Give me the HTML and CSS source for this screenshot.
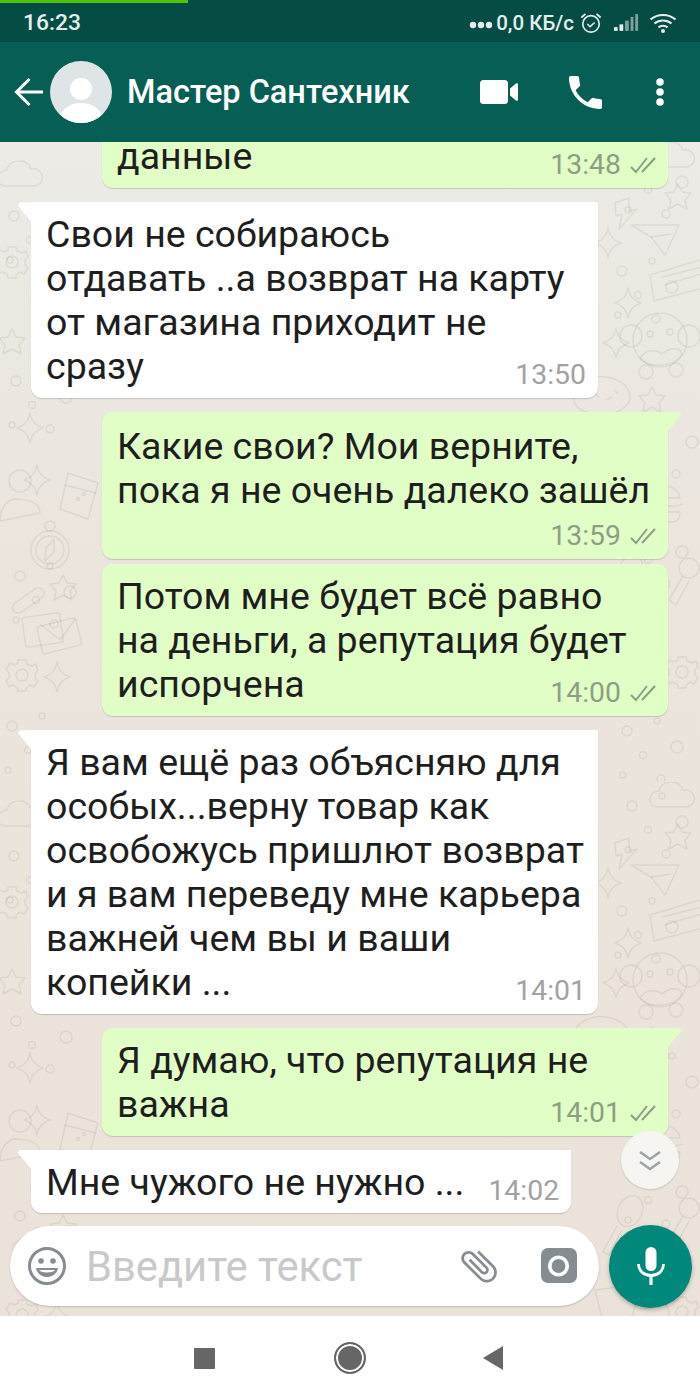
FILE: index.html
```html
<!DOCTYPE html>
<html lang="ru">
<head>
    <meta charset="UTF-8">
    <meta name="viewport" content="width=device-width, initial-scale=1.0">
    <title>Мастер Сантехник</title>
    <link rel="stylesheet" href="styles.css">
</head>
<body>
<div class="phone">
    <div class="progress"></div>

    <div class="status-bar">
        <span class="clock">16:23</span>
        <div class="status-right">
            <svg class="status-dots" viewBox="0 0 24 8" width="24" height="8"><circle cx="4" cy="4" r="3.2"/><circle cx="12" cy="4" r="3.2"/><circle cx="20" cy="4" r="3.2"/></svg>
            <span class="net-speed">0,0 КБ/с</span>
            <svg class="alarm" viewBox="0 0 24 24" width="22" height="22">
                <circle cx="12" cy="13" r="9" fill="none" stroke="#e3efec" stroke-width="1.8"/>
                <path d="M8 13l3 3 5-4.500" fill="none" stroke="#e3efec" stroke-width="1.6"/>
                <path d="M1.500 6L6 2M22.500 6L18 2" fill="none" stroke="#e3efec" stroke-width="2"/>
            </svg>
            <svg class="signal" viewBox="0 0 28 20" width="26" height="19">
                <rect x="1" y="15" width="4" height="4" fill="#e3efec"/>
                <rect x="7" y="12" width="4" height="7" fill="#e3efec"/>
                <rect x="13" y="8" width="4" height="11" fill="#7fa39c"/>
                <rect x="19" y="4" width="3" height="15" fill="#7fa39c"/>
                <rect x="24" y="1" width="3" height="18" fill="#7fa39c"/>
            </svg>
            <svg class="wifi" viewBox="0 0 28 20" width="28" height="20">
                <path d="M1.500 6.500C8.500 .5 19.500 .5 26.500 6.500M5.500 10.500C10.500 6.500 17.500 6.500 22.500 10.500M9.500 14.300C12 12.500 16 12.500 18.500 14.300" fill="none" stroke="#e3efec" stroke-width="2.200"/>
                <circle cx="14" cy="18" r="2" fill="#e3efec"/>
            </svg>
        </div>
    </div>

    <header class="toolbar">
        <svg class="back" viewBox="0 0 30 30" width="30" height="30"><path d="M29 15H3M15.500 2L2.500 15l13 13" fill="none" stroke="#fff" stroke-width="3"/></svg>
        <svg class="avatar" viewBox="0 0 62 62" width="62" height="62">
            <defs><clipPath id="avatar-clip"><circle cx="31" cy="31" r="31"/></clipPath></defs>
            <circle cx="31" cy="31" r="31" fill="#dfe5e7"/>
            <circle cx="31" cy="28" r="11" fill="#fff"/>
            <ellipse cx="31" cy="60" rx="22" ry="18" fill="#fff" clip-path="url(#avatar-clip)"/>
        </svg>
        <h1 class="contact">Мастер Сантехник</h1>
        <div class="toolbar-actions">
            <svg class="video" viewBox="0 0 38 24" width="38" height="24">
                <rect x="0" y="0" width="28" height="24" rx="3.500" fill="#fff"/>
                <path d="M30 8.500l6-5c1-.6 2 0 2 1v15c0 1-1 1.600-2 1l-6-5z" fill="#fff"/>
            </svg>
            <svg class="call" viewBox="3 3 18 18" width="33" height="33"><path fill="#fff" d="M6.620 10.790c1.440 2.830 3.760 5.140 6.590 6.590l2.200-2.200c.27-.27.67-.36 1.020-.24 1.120.37 2.330.57 3.570.57.55 0 1 .45 1 1V20c0 .55-.45 1-1 1-9.390 0-17-7.610-17-17 0-.55.45-1 1-1h3.500c.55 0 1 .45 1 1 0 1.250.2 2.450.57 3.570.11.35.03.74-.25 1.020l-2.200 2.200z"/></svg>
            <svg class="more" viewBox="0 0 8 28" width="8" height="28"><circle cx="4" cy="4" r="3.800" fill="#fff"/><circle cx="4" cy="14" r="3.800" fill="#fff"/><circle cx="4" cy="24" r="3.800" fill="#fff"/></svg>
        </div>
    </header>

    <main class="chat">
        <!-- wallpaper doodles -->
        <svg class="doodles" width="700" height="1174">
            <defs>
                <path id="star4" d="M0-15Q2-3 13 0Q2 3 0 15Q-2 3-13 0Q-2-3 0-15z"/>
                <path id="star5" d="M0-13l4 8 9 1-6 7 2 9-9-5-9 5 2-9-6-7 9-1z"/>
                <g id="cloud"><path d="M-24 12c-9-2-8-15 3-16 2-12 21-12 24-1 11-3 17 14 4 17z"/></g>
                <g id="bolt"><path d="M4-17L-10-12l1 13 6-2-3 15L12-6 4-4z"/></g>
                <g id="plane"><path d="M-24-10L24-10 10 20-4 2z"/><path d="M-4 2L16-1"/></g>
                <g id="ticket"><path d="M-30-2L30-20 34 8-26 24z"/><path d="M-18 0L30-12M-16 8L31-6"/></g>
                <g id="monkey">
                    <circle cy="0" r="27"/><circle cx="-29" cy="-4" r="11"/><circle cx="29" cy="-4" r="11"/>
                    <circle cx="-10" cy="-6" r="3"/><circle cx="10" cy="-8" r="3"/>
                    <path d="M-20 18c6-10 18-8 22-4 6-6 18-8 20 0-6 12-32 16-42 4z"/>
                    <circle cx="-14" cy="32" r="7"/><circle cx="16" cy="30" r="7"/>
                </g>
                <g id="donut"><path d="M-30 14c-8-20 18-32 36-26 16 4 28 20 10 32-14 8-38 6-46-6z"/><path d="M-10 4l4 3M2 10l5-3M10 0l3 4"/></g>
                <g id="person"><circle cy="-14" r="11"/><path d="M-20 26c0-12 6-20 14-22 10 0 26 2 26 14z"/></g>
                <g id="cup"><path d="M-12-22L18-12 8 24-20 14z"/><path d="M-15-10L16-2"/><circle cx="-2" cy="4" r="1.500"/><circle cx="4" cy="-1" r="1.500"/></g>
                <g id="compass"><circle r="19"/><circle r="14"/><circle cy="-24" r="5"/><path d="M4-11L4 2-5 11-4-2z"/></g>
                <g id="clip"><rect x="-18" y="-5" width="36" height="11" rx="5.500" transform="rotate(-35)"/></g>
                <g id="mail"><rect x="-26" y="-18" width="38" height="30" rx="3" transform="rotate(-8)"/><rect x="-12" y="-8" width="40" height="28" rx="3" transform="rotate(-14)"/><path d="M-10-8L10 8 26-14"/></g>
                <g id="gear"><circle r="6"/><path d="M-4-15H4L5-11 10-9 14-11 16-5 13-2V3L16 6 12 12 8 10 4 13 4 16H-4L-5 12-10 10-13 12-16 6-13 3V-2L-16-6-12-12-8-10-4-12z"/></g>
                <g id="burger"><path d="M-22-4c2-18 42-18 44 0z"/><path d="M-24 2c6 4 10-2 16 1s10-3 16 0 10 1 16-1"/><path d="M-22 10h44c0 8-4 10-8 10h-28c-4 0-8-2-8-10z"/></g>
                <g id="pop"><ellipse cy="-12" rx="12" ry="16" transform="rotate(25)"/><path d="M-8 4L-22 30l6 3L-3 8"/></g>
                <g id="lemon"><path d="M-30-12L18-18 4 22-22 20z"/><circle cx="20" cy="-10" r="17"/><path d="M20-27V7M3-10H37"/></g>
                <g id="key"><circle cx="4" cy="-14" r="10"/><path d="M-2-6L-16 18l7 5 13-24"/></g>
                <g id="dots">
                    <circle cx="12" cy="14" r="5"/><circle cx="42" cy="4" r="3"/><circle cx="28" cy="38" r="3.500"/>
                    <circle cx="62" cy="30" r="6"/><circle cx="8" cy="58" r="3"/><circle cx="46" cy="62" r="4"/>
                </g>
                <pattern id="doodle" width="700" height="640" patternUnits="userSpaceOnUse">
                    <g fill="none" stroke="#746b5a" stroke-opacity="0.12" stroke-width="1.500" stroke-linejoin="round">
                        <use href="#cloud" x="680" y="13"/>
                        <use href="#star5" x="678" y="55"/>
                        <use href="#bolt" x="625" y="73"/>
                        <use href="#plane" x="655" y="93"/>
                        <use href="#star4" x="608" y="101"/>
                        <use href="#ticket" x="680" y="135"/>
                        <use href="#star4" x="628" y="161"/>
                        <use href="#monkey" x="660" y="198"/>
                        <use href="#star4" x="616" y="201"/>
                        <use href="#donut" x="605" y="248"/>
                        <use href="#star5" x="652" y="258"/>
                        <use href="#star4" x="30" y="286"/>
                        <use href="#person" x="20" y="353"/>
                        <use href="#star4" x="37" y="338"/>
                        <use href="#cup" x="80" y="353"/>
                        <use href="#compass" x="50" y="408"/>
                        <use href="#clip" x="28" y="458"/>
                        <use href="#star5" x="63" y="446"/>
                        <use href="#mail" x="50" y="490"/>
                        <use href="#gear" x="22" y="533"/>
                        <use href="#star4" x="57" y="535"/>
                        <use href="#cloud" x="28" y="32"/>
                        <use href="#gear" x="12" y="120"/>
                        <use href="#star5" x="12" y="200"/>
                        <use href="#burger" x="658" y="360"/>
                        <use href="#pop" x="625" y="440"/>
                        <use href="#key" x="685" y="440"/>
                        <use href="#lemon" x="625" y="520"/>
                        <use href="#gear" x="682" y="530"/>
                        <use href="#dots" x="620" y="10"/>
                        <use href="#dots" x="610" y="115"/>
                        <use href="#dots" x="630" y="270"/>
                        <use href="#dots" x="615" y="575"/>
                        <use href="#dots" x="620" y="380"/>
                        <use href="#dots" x="2" y="60"/>
                        <use href="#dots" x="4" y="225"/>
                        <use href="#dots" x="0" y="570"/>
                        <use href="#dots" x="8" y="420"/>
                    </g>
                </pattern>
            </defs>
            <rect width="700" height="1174" fill="url(#doodle)"/>
        </svg>

        <div class="messages">
            <div class="bubble bubble-out bubble-cut">
                данные<span class="meta meta-out">13:48 <svg class="ticks" viewBox="0 0 26 18" width="26" height="18"><path d="M1 11l5 5L17 2M12 16L25 2" fill="none" stroke="#8e9e85" stroke-width="2"/></svg></span>
            </div>
            <div class="bubble bubble-in tail group-start">
                Свои не собираюсь<br>отдавать ..а возврат на карту<br>от магазина приходит не<br>сразу<span class="meta">13:50</span>
            </div>
            <div class="bubble bubble-out tail group-start bubble-tight">
                Какие свои? Мои верните,<br>пока я не очень далеко зашёл<span class="meta meta-out">13:59 <svg class="ticks" viewBox="0 0 26 18" width="26" height="18"><path d="M1 11l5 5L17 2M12 16L25 2" fill="none" stroke="#8e9e85" stroke-width="2"/></svg></span>
            </div>
            <div class="bubble bubble-out">
                Потом мне будет всё равно<br>на деньги, а репутация будет<br>испорчена<span class="meta meta-out">14:00 <svg class="ticks" viewBox="0 0 26 18" width="26" height="18"><path d="M1 11l5 5L17 2M12 16L25 2" fill="none" stroke="#8e9e85" stroke-width="2"/></svg></span>
            </div>
            <div class="bubble bubble-in tail group-start">
                Я вам ещё раз объясняю для<br>особых...верну товар как<br>освобожусь пришлют возврат<br>и я вам переведу мне карьера<br>важней чем вы и ваши<br>копейки ...<span class="meta">14:01</span>
            </div>
            <div class="bubble bubble-out tail group-start">
                Я думаю, что репутация не<br>важна<span class="meta meta-out">14:01 <svg class="ticks" viewBox="0 0 26 18" width="26" height="18"><path d="M1 11l5 5L17 2M12 16L25 2" fill="none" stroke="#8e9e85" stroke-width="2"/></svg></span>
            </div>
            <div class="bubble bubble-in bubble-fit tail group-start">
                Мне чужого не нужно ...<span class="meta">14:02</span>
            </div>
        </div>

        <button class="scroll-down" type="button">
            <svg viewBox="0 0 24 22" width="24" height="22"><path d="M2 2l10 7 10-7M2 12l10 7 10-7" fill="none" stroke="#9aa6a6" stroke-width="2.600"/></svg>
        </button>

        <div class="composer">
            <div class="input-bar">
                <svg class="smile" viewBox="0 0 40 40" width="40" height="40">
                    <circle cx="20" cy="20" r="17.500" fill="none" stroke="#858d92" stroke-width="3"/>
                    <circle cx="14" cy="15" r="2.800" fill="#858d92"/><circle cx="26" cy="15" r="2.800" fill="#858d92"/>
                    <path d="M9 22h22c-1 6-6 9-11 9s-10-3-11-9z" fill="#858d92"/>
                    <path d="M12 24h16c-1.500 1.800-4.500 2.500-8 2.500s-6.500-.7-8-2.500z" fill="#fff"/>
                </svg>
                <span class="placeholder">Введите текст</span>
                <svg class="clip" viewBox="0 0 24 24" width="44" height="44"><path transform="rotate(-45 12 12)" fill="#858d92" d="M16.500 6v11.500c0 2.210-1.790 4-4 4s-4-1.790-4-4V5c0-1.380 1.120-2.500 2.500-2.500s2.500 1.120 2.500 2.500v10.500c0 .55-.45 1-1 1s-1-.45-1-1V6H10v9.500c0 1.380 1.120 2.500 2.500 2.500s2.500-1.120 2.500-2.500V5c0-2.210-1.790-4-4-4S7 2.790 7 5v12.500c0 3.040 2.460 5.500 5.500 5.500s5.500-2.460 5.500-5.500V6h-1.500z"/></svg>
                <svg class="camera" viewBox="0 0 36 36" width="36" height="36">
                    <rect width="36" height="35" rx="7" fill="#858d92"/>
                    <circle cx="17.500" cy="18" r="8.700" fill="none" stroke="#fff" stroke-width="3.600"/>
                </svg>
            </div>
            <button class="mic" type="button">
                <svg viewBox="0 0 28 38" width="28" height="38">
                    <rect x="8.500" y="0" width="11" height="24" rx="5.500" fill="#fff"/>
                    <path d="M1.500 17c0 7 5.500 11.500 12.500 11.500S26.500 24 26.500 17" fill="none" stroke="#fff" stroke-width="2.800"/>
                    <path d="M14 28v10" stroke="#fff" stroke-width="3.200"/>
                </svg>
            </button>
        </div>
    </main>

    <nav class="nav-bar">
        <span class="nav-square"></span>
        <span class="nav-circle"></span>
        <span class="nav-back"></span>
    </nav>
</div>
</body>
</html>
```

FILE: styles.css
```css
* {
    box-sizing: border-box;
}

body {
    margin: 0;
    font-family: 'Roboto', sans-serif;
    color: #1e1e1e;
}

.phone {
    position: relative;
    width: 700px;
    height: 1400px;
    display: flex;
    flex-direction: column;
    overflow: hidden;
}

.progress {
    position: absolute;
    top: 0;
    left: 0;
    width: 188px;
    height: 3px;
    background: #4fc20a;
}

.status-bar {
    height: 42px;
    flex: none;
    display: flex;
    align-items: center;
    justify-content: space-between;
    padding: 3px 23px 0;
    background: #054d44;
    color: #e3efec;
    font-size: 22.8px;
    font-weight: 500;
}

.status-right {
    display: flex;
    align-items: center;
}

.status-dots {
    fill: #e3efec;
    margin: 4px 3px 0 0;
}

.net-speed {
    font-size: 20.5px;
}

.alarm {
    margin-left: 6px;
}

.signal {
    margin-left: 11px;
}

.wifi {
    margin-left: 10px;
}

.toolbar {
    height: 100px;
    flex: none;
    display: flex;
    align-items: center;
    padding: 0 36px 0 14px;
    background: #075e54;
    position: relative;
    z-index: 2;
}

.avatar {
    margin-left: 6px;
}

.contact {
    margin: 0 0 0 15px;
    color: #fff;
    font-size: 32.5px;
    font-weight: 500;
}

.toolbar-actions {
    margin-left: auto;
    display: flex;
    align-items: center;
    gap: 50px;
}

.toolbar-actions .call {
    margin-left: 1px;
}

.toolbar-actions .more {
    margin-left: 4px;
}

.chat {
    position: relative;
    flex: 1;
    display: flex;
    flex-direction: column;
    overflow: hidden;
    background: linear-gradient(180deg, #ecebe6 0%, #ebe5dd 35%, #ebe3da 100%);
}

.doodles {
    position: absolute;
    top: 0;
    left: 0;
}

.messages {
    position: relative;
    flex: 1;
    min-height: 0;
    display: flex;
    flex-direction: column;
    padding: 0 32px 0 31px;
}

.bubble {
    position: relative;
    width: 567px;
    padding: 10px 12px 9.5px 15px;
    font-size: 37.5px;
    line-height: 44px;
    border-radius: 0 0 11px 11px;
    box-shadow: 0 1px 1px rgba(0, 0, 0, 0.16);
    display: flow-root;
    margin-top: 5px;
}

.bubble-in {
    background: #fff;
    align-self: flex-start;
}

.bubble-out {
    width: 566px;
    background: #e1fec6;
    align-self: flex-end;
    border-radius: 11px;
}

.bubble-fit {
    width: fit-content;
}

/* only the last line of this one is still on screen */
.bubble-cut {
    margin-top: 0;
    padding-top: 0;
    padding-bottom: 17px;
    line-height: 29px;
    border-radius: 0 0 11px 11px;
}

.bubble-tight {
    padding-top: 12px;
    padding-bottom: 3px;
}

.group-start {
    margin-top: 14.4px;
}

.tail::before {
    content: "";
    position: absolute;
    top: 0;
    width: 14px;
    height: 20px;
}

.bubble-in.tail {
    border-top-left-radius: 0;
}

.bubble-in.tail::before {
    left: -13px;
    background: #fff;
    clip-path: polygon(2px 0, 100% 0, 100% 100%, 0 3px);
}

.bubble-out.tail {
    border-top-right-radius: 0;
}

.bubble-out.tail::before {
    right: -13px;
    background: #e1fec6;
    clip-path: polygon(0 0, calc(100% - 2px) 0, 100% 3px, 0 100%);
}

.meta {
    float: right;
    display: flex;
    align-items: center;
    gap: 9px;
    height: 41px;
    margin: 9px 0 -9px 24px;
    padding-top: 3px;
    color: #a2a2a2;
    font-size: 28.4px;
    line-height: 38px;
}

.meta-out {
    color: #8e9e85;
}

.bubble-cut .meta {
    margin-top: 1px;
    margin-bottom: -15px;
}

.bubble-tight .meta {
    margin-top: 2px;
    margin-bottom: 1px;
}

.scroll-down {
    position: absolute;
    right: 21px;
    top: 989px;
    width: 58px;
    height: 58px;
    padding: 5px 0 0;
    border: none;
    border-radius: 50%;
    background: #f6f5f1;
    box-shadow: 0 1px 2px rgba(0, 0, 0, 0.14);
}

.composer {
    position: relative;
    display: flex;
    align-items: center;
    gap: 10px;
    padding: 0 8px 8px 10px;
    height: 92px;
    flex: none;
}

.input-bar {
    width: 589px;
    height: 80px;
    flex: none;
    display: flex;
    align-items: center;
    padding: 0 22px 0 17px;
    border-radius: 40px;
    background: #fff;
    box-shadow: 0 1px 2px rgba(0, 0, 0, 0.18);
}

.placeholder {
    margin-left: 19px;
    color: #c9c9c9;
    font-size: 41.7px;
}

.clip {
    margin-left: auto;
}

.camera {
    margin-left: 40px;
}

.mic {
    width: 83px;
    height: 83px;
    flex: none;
    padding: 0;
    display: flex;
    align-items: center;
    justify-content: center;
    border: none;
    border-radius: 50%;
    background: #00897b;
    box-shadow: 0 2px 4px rgba(0, 0, 0, 0.25);
}

.nav-bar {
    height: 84px;
    flex: none;
    background: #fff;
    display: flex;
    align-items: center;
    padding: 0 197px 0 194px;
    justify-content: space-between;
}

.nav-square {
    width: 21px;
    height: 21px;
    border-radius: 1px;
    background: #666;
}

.nav-circle {
    width: 32px;
    height: 32px;
    margin-left: 2px;
    border-radius: 50%;
    border: 2px solid #666;
    background: #666;
    box-shadow: inset 0 0 0 2px #fff;
}

.nav-back {
    width: 20px;
    height: 24px;
    background: #666;
    clip-path: polygon(100% 0, 100% 100%, 0 50%);
}
```
